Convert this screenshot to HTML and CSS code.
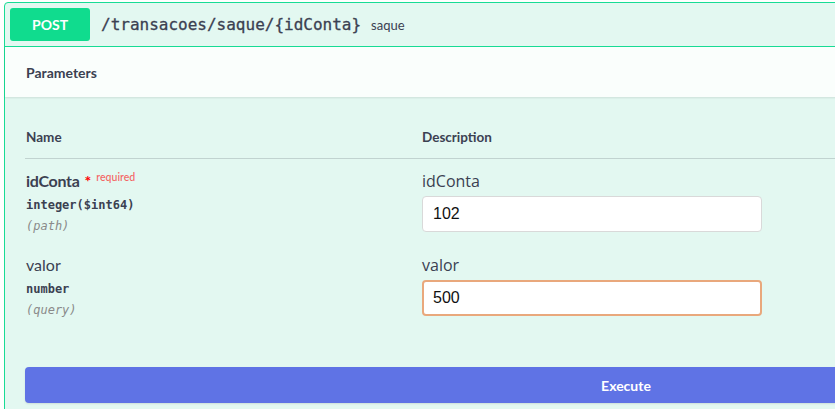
FILE: index.html
```html
<!DOCTYPE html>
<html lang="pt">
<head>
<meta charset="utf-8">
<title>POST /transacoes/saque/{idConta}</title>
<link rel="stylesheet" href="styles.css">
</head>
<body>
<div class="page">
  <div class="opblock">
    <div class="summary">
      <span class="method">POST</span>
      <span class="path">/transacoes/saque/{idConta}</span>
      <span class="summary-desc">saque</span>
    </div>
    <div class="section-header">
      <h4 class="section-title">Parameters</h4>
    </div>
    <div class="params">
      <div class="params-head">
        <div class="col-name">Name</div>
        <div class="col-desc">Description</div>
      </div>
      <div class="param-row">
        <div class="col-name">
          <div class="param-name required">idConta<span class="star">*</span><span class="req">required</span></div>
          <div class="param-type">integer($int64)</div>
          <div class="param-in">(path)</div>
        </div>
        <div class="col-desc">
          <div class="desc-label">idConta</div>
          <input class="field" type="text" value="102">
        </div>
      </div>
      <div class="param-row">
        <div class="col-name">
          <div class="param-name">valor</div>
          <div class="param-type">number</div>
          <div class="param-in">(query)</div>
        </div>
        <div class="col-desc">
          <div class="desc-label">valor</div>
          <input class="field field-active" type="text" value="500">
        </div>
      </div>
    </div>
    <div class="execute-wrapper">
      <button class="execute" type="button">Execute</button>
    </div>
  </div>
</div>
</body>
</html>
```

FILE: styles.css
```css
html, body {
  margin: 0;
  padding: 0;
  background: #ffffff;
  overflow: hidden;
}

.page {
  padding: 2px 0 0 4px;
  width: 1260px;
}

.opblock {
  width: 1242px;
  border: 1px solid #18dc95;
  border-radius: 4px;
  background: #e3f8f1;
  font-family: Lato, "Noto Sans", sans-serif;
  color: #3b4151;
  padding-bottom: 20px;
}

.summary {
  display: flex;
  align-items: center;
  padding: 5px;
  border-bottom: 1px solid #18dc95;
}

.method {
  width: 80px;
  height: 33px;
  display: flex;
  align-items: center;
  justify-content: center;
  background: #10dc8e;
  border-radius: 3px;
  color: #ffffff;
  font-weight: 700;
  font-size: 14px;
}

.path {
  margin-left: 11px;
  font-family: "DejaVu Sans Mono", monospace;
  font-size: 16px;
  font-weight: 400;
  color: #3b4151;
  -webkit-text-stroke: 0.3px #3b4151;
}

.summary-desc {
  margin-left: 10px;
  font-size: 13px;
  color: #3b4151;
}

.section-header {
  height: 50px;
  display: flex;
  align-items: center;
  padding: 0 21px;
  background: rgba(255, 255, 255, 0.8);
  box-shadow: 0 1px 2px rgba(0, 0, 0, 0.1);
}

.section-title {
  margin: 0;
  font-size: 14px;
  font-weight: 700;
  line-height: 20px;
  padding-top: 1px;
}

.params {
  padding: 0 20px;
}

.params-head {
  display: flex;
  padding: 30px 0 11px;
  border-bottom: 1px solid rgba(59, 65, 81, 0.2);
  font-size: 13.5px;
  font-weight: 700;
  line-height: 20px;
}

.col-name {
  width: 396px;
  flex: none;
  padding-left: 1px;
}

.col-desc {
  flex: 1;
}

.param-row {
  display: flex;
  padding: 11px 0 9px;
}

.param-name {
  font-size: 16px;
  line-height: 22px;
}

.param-name.required {
  font-weight: 700;
  letter-spacing: -0.3px;
}

.star {
  position: relative;
  top: 0;
  padding-left: 5px;
  color: #ff0000;
  font-size: 16px;
  line-height: 1;
  letter-spacing: 0;
}

.req {
  position: relative;
  top: -6px;
  padding-left: 5px;
  font-size: 10.5px;
  font-weight: 600;
  line-height: 1;
  letter-spacing: 0;
  color: rgba(255, 0, 0, 0.6);
}

.param-type {
  padding: 5px 0;
  font-family: "DejaVu Sans Mono", monospace;
  font-size: 12px;
  font-weight: 600;
  line-height: 16px;
}

.param-in {
  font-family: "DejaVu Sans Mono", monospace;
  font-size: 12px;
  font-style: italic;
  line-height: 16px;
  color: #8a8a8a;
}

.desc-label {
  font-family: "Open Sans", sans-serif;
  font-size: 16px;
  line-height: 22px;
  color: #3b4151;
}

.field {
  display: block;
  box-sizing: border-box;
  margin-top: 4px;
  width: 340px;
  height: 36px;
  padding: 0 10px;
  border: 1px solid #d9d9d9;
  border-radius: 4px;
  background: #ffffff;
  font-family: "Liberation Sans", Arial, sans-serif;
  font-size: 16px;
  color: #111111;
  outline: none;
}

.field-active {
  border: 2px solid #e9a87c;
  padding: 0 9px;
}

.execute-wrapper {
  padding: 40px 20px 0;
}

.execute {
  display: block;
  width: 100%;
  height: 36px;
  border: none;
  border-radius: 4px;
  background: #5f73e5;
  color: #ffffff;
  font-family: Lato, "Noto Sans", sans-serif;
  font-size: 14px;
  font-weight: 700;
  box-shadow: 0 1px 2px rgba(0, 0, 0, 0.1);
}
```
